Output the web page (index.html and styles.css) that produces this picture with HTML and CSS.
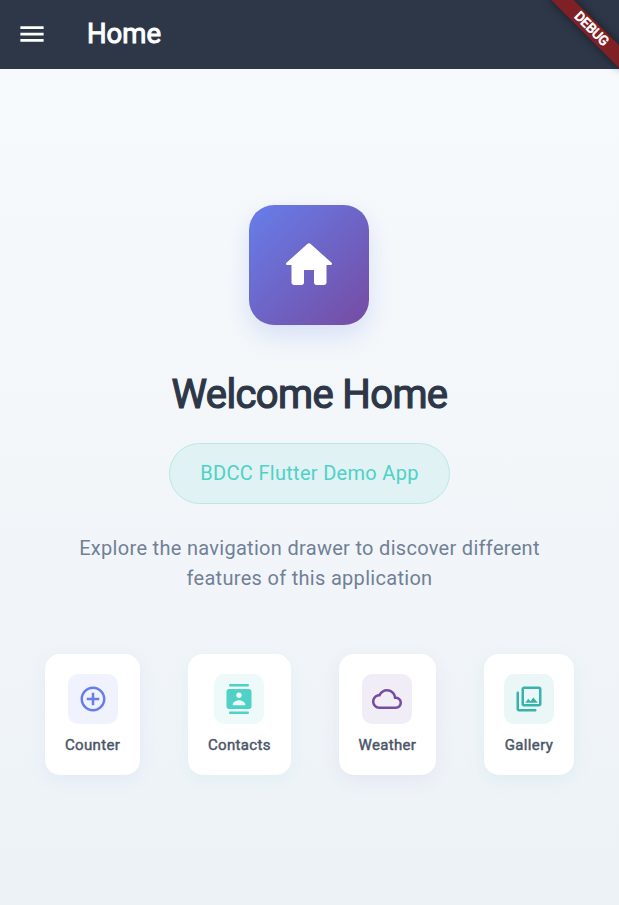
FILE: index.html
```html
<!DOCTYPE html>
<html lang="en">
<head>
<meta charset="utf-8">
<title>Home</title>
<link rel="stylesheet" href="styles.css">
</head>
<body>
<header class="app-bar">
  <svg class="menu" viewBox="0 0 24 24"><path d="M2.700 18.200h18.600v-2.200H2.700v2.200zm0-5.100h18.600v-2.200H2.700v2.200zm0-7.300v2.200h18.600V5.800H2.700z"/></svg>
  <h1 class="bar-title">Home</h1>
</header>
<div class="banner-clip"><div class="banner">DEBUG</div></div>
<main class="content">
  <div class="hero"><svg viewBox="0 0 24 24"><path d="M10 19v-5h4v5c0 .55.45 1 1 1h3c.55 0 1-.45 1-1v-7h1.700c.46 0 .68-.57.33-.87L12.670 3.600c-.38-.34-.96-.34-1.340 0l-8.360 7.530c-.34.3-.13.87.33.87H5v7c0 .55.45 1 1 1h3c.55 0 1-.45 1-1z"/></svg></div>
  <h2 class="welcome">Welcome Home</h2>
  <div class="pill">BDCC Flutter Demo App</div>
  <p class="description">Explore the navigation drawer to discover different features of this application</p>
  <div class="cards">
    <div class="card counter">
      <div class="tile"><svg viewBox="0 0 24 24"><path d="M13 7h-2v4H7v2h4v4h2v-4h4v-2h-4V7zm-1-5C6.480 2 2 6.480 2 12s4.480 10 10 10 10-4.480 10-10S17.520 2 12 2zm0 18c-4.410 0-8-3.590-8-8s3.590-8 8-8 8 3.590 8 8-3.590 8-8 8z"/></svg></div>
      <span class="label">Counter</span>
    </div>
    <div class="card contacts">
      <div class="tile"><svg viewBox="0 0 24 24"><path d="M19 0H5c-.55 0-1 .45-1 1s.45 1 1 1h14c.55 0 1-.45 1-1s-.45-1-1-1zM5 24h14c.55 0 1-.45 1-1s-.45-1-1-1H5c-.55 0-1 .45-1 1s.45 1 1 1zM20 4H4c-1.100 0-2 .9-2 2v12c0 1.100.9 2 2 2h16c1.100 0 2-.9 2-2V6c0-1.100-.9-2-2-2zm-8 2.750c1.240 0 2.250 1.010 2.250 2.250s-1.010 2.250-2.250 2.250S9.750 10.240 9.750 9 10.760 6.750 12 6.750zM17 17H7v-.75c0-2 3.330-3.250 5-3.250s5 1.250 5 3.250V17z"/></svg></div>
      <span class="label">Contacts</span>
    </div>
    <div class="card weather">
      <div class="tile"><svg viewBox="0 0 24 24"><path d="M19.350 10.040C18.670 6.590 15.640 4 12 4 9.110 4 6.600 5.640 5.350 8.040 2.340 8.360 0 10.910 0 14c0 3.310 2.690 6 6 6h13c2.760 0 5-2.240 5-5 0-2.640-2.050-4.780-4.650-4.960zM19 18H6c-2.210 0-4-1.790-4-4s1.790-4 4-4h.71C7.370 7.690 9.480 6 12 6c3.040 0 5.500 2.460 5.500 5.500v.5H19c1.660 0 3 1.340 3 3s-1.340 3-3 3z"/></svg></div>
      <span class="label">Weather</span>
    </div>
    <div class="card gallery">
      <div class="tile"><svg viewBox="0 0 24 24"><path d="M9 15l2.400-3.200 1.700 2 2.400-3 3.500 4.200z"/><path d="M20 2H8c-1.100 0-2 .9-2 2v12c0 1.100.9 2 2 2h12c1.100 0 2-.9 2-2V4c0-1.100-.9-2-2-2zm0 14H8V4h12v12zM3 6c-.55 0-1 .45-1 1v13c0 1.100.9 2 2 2h13c.55 0 1-.45 1-1s-.45-1-1-1H4V7c0-.55-.45-1-1-1z"/></svg></div>
      <span class="label">Gallery</span>
    </div>
  </div>
</main>
</body>
</html>
```
FILE: styles.css
```css
* { box-sizing: border-box; }
body {
  margin: 0;
  height: 905px;
  display: flex;
  flex-direction: column;
  position: relative;
  overflow: hidden;
  font-family: Roboto, sans-serif;
  font-weight: 400;
}
svg { display: block; fill: currentColor; }
h1, h2, p { margin: 0; font-weight: 400; }
.app-bar {
  height: 69px;
  flex: none;
  display: flex;
  align-items: center;
  padding: 0 17px 2px;
  background: #2d3748;
  color: #fff;
}
.menu { width: 30px; height: 30px; }
.bar-title {
  margin-left: 40px;
  font-size: 27.5px;
  line-height: 36px;
  -webkit-text-stroke: 1px currentColor;
}
.banner-clip {
  position: absolute;
  top: 0;
  right: 0;
  width: 100px;
  height: 100px;
  overflow: hidden;
}
.banner {
  position: absolute;
  left: 50px;
  top: 32px;
  width: 100px;
  height: 15.5px;
  padding-left: 2px;
  transform: rotate(45deg);
  transform-origin: 50px -32px;
  background: #7f2025;
  box-shadow: 0 0 8px rgba(0, 0, 0, .5);
  color: #fff;
  font-size: 13.25px;
  -webkit-text-stroke: .8px currentColor;
  line-height: 15px;
  text-align: center;
}
.content {
  flex: 1;
  display: flex;
  flex-direction: column;
  align-items: center;
  padding-top: 136px;
  background: linear-gradient(#f7fafc, #edf2f7);
}
.hero {
  width: 120px;
  height: 120px;
  margin-right: 1px;
  display: grid;
  place-items: center;
  border-radius: 25px;
  color: #fff;
  background: linear-gradient(135deg, #667eea, #764ba2);
  box-shadow: 0 10px 25px rgba(102, 126, 234, .2);
}
.hero svg { width: 60px; height: 60px; }
.welcome {
  margin-top: 46px;
  font-size: 40px;
  line-height: 48px;
  letter-spacing: -.625px;
  color: #2d3748;
  -webkit-text-stroke: 1.2px currentColor;
}
.pill {
  margin-top: 23.5px;
  height: 61px;
  padding: 0 30px;
  border: 1px solid #b9e9e5;
  border-radius: 31px;
  background: #e0f2f4;
  color: #4fd1c7;
  font-size: 20px;
  line-height: 59px;
  letter-spacing: .3px;
}
.description {
  width: 500px;
  margin-top: 29.5px;
  color: #718096;
  font-size: 20px;
  line-height: 30px;
  letter-spacing: .3px;
  text-align: center;
}
.cards {
  align-self: stretch;
  display: flex;
  justify-content: space-between;
  margin-top: 61px;
  padding: 0 45px;
}
.card {
  height: 121px;
  padding: 20px 20px 0;
  display: flex;
  flex-direction: column;
  align-items: center;
  border-radius: 15px;
  background: #fff;
}
.tile {
  width: 50px;
  height: 50px;
  display: grid;
  place-items: center;
  border-radius: 10px;
}
.tile svg { width: 30px; height: 30px; }
.label {
  margin-top: 12px;
  color: #4a5568;
  font-size: 15px;
  line-height: 18px;
  letter-spacing: .34px;
  -webkit-text-stroke: .45px currentColor;
}
.counter { box-shadow: 0 5px 18px rgba(102, 126, 234, .08); }
.counter .tile { background: #f0f2fd; color: #667eea; }
.contacts { box-shadow: 0 5px 18px rgba(79, 209, 199, .08); }
.contacts .tile { background: #edfaf9; color: #4fd1c7; }
.weather { box-shadow: 0 5px 18px rgba(118, 75, 162, .08); }
.weather .tile { background: #f1edf6; color: #764ba2; }
.gallery { box-shadow: 0 5px 18px rgba(56, 178, 172, .08); }
.gallery .tile { background: #ebf7f7; color: #38b2ac; }
```
